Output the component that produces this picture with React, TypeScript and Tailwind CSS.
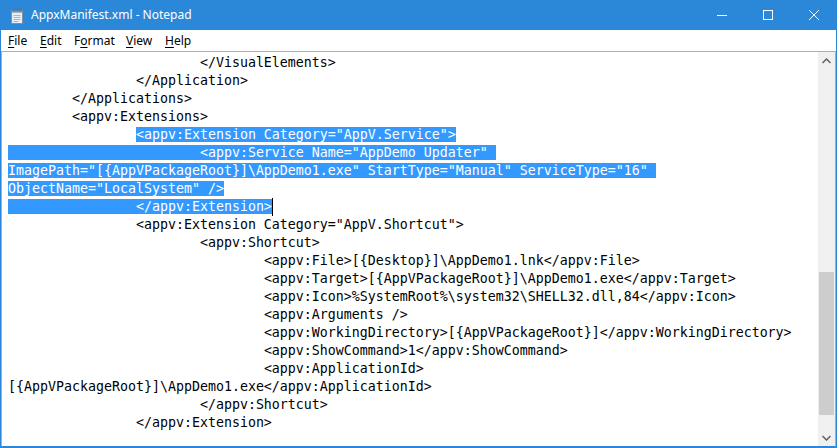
const lines: { pre?: string; sel?: string; post?: string; caret?: boolean }[] = [
  { pre: "\t\t\t</VisualElements>" },
  { pre: "\t\t</Application>" },
  { pre: "\t</Applications>" },
  { pre: "\t<appv:Extensions>" },
  { pre: "\t\t", sel: '<appv:Extension Category="AppV.Service">' },
  { sel: '\t\t\t<appv:Service Name="AppDemo Updater" ' },
  { sel: 'ImagePath="[{AppVPackageRoot}]\\AppDemo1.exe" StartType="Manual" ServiceType="16" ' },
  { sel: 'ObjectName="LocalSystem" />' },
  { sel: "\t\t</appv:Extension>", caret: true },
  { pre: '\t\t<appv:Extension Category="AppV.Shortcut">' },
  { pre: "\t\t\t<appv:Shortcut>" },
  { pre: "\t\t\t\t<appv:File>[{Desktop}]\\AppDemo1.lnk</appv:File>" },
  { pre: "\t\t\t\t<appv:Target>[{AppVPackageRoot}]\\AppDemo1.exe</appv:Target>" },
  { pre: "\t\t\t\t<appv:Icon>%SystemRoot%\\system32\\SHELL32.dll,84</appv:Icon>" },
  { pre: "\t\t\t\t<appv:Arguments />" },
  { pre: "\t\t\t\t<appv:WorkingDirectory>[{AppVPackageRoot}]</appv:WorkingDirectory>" },
  { pre: "\t\t\t\t<appv:ShowCommand>1</appv:ShowCommand>" },
  { pre: "\t\t\t\t<appv:ApplicationId>" },
  { pre: "[{AppVPackageRoot}]\\AppDemo1.exe</appv:ApplicationId>" },
  { pre: "\t\t\t</appv:Shortcut>" },
  { pre: "\t\t</appv:Extension>" },
];

const menu = [
  { key: "F", rest: "ile", w: "w-[32px]" },
  { key: "E", rest: "dit", w: "w-[34px]" },
  { key: "", lead: "F", keyMid: "o", rest: "rmat", w: "w-[52px]" },
  { key: "V", rest: "iew", w: "w-[39px]" },
  { key: "H", rest: "elp", w: "w-[40px]" },
];

function NotepadIcon() {
  return (
    <svg width="16" height="16" viewBox="0 0 16 16">
      <rect x="2.5" y="2.5" width="11" height="13" fill="#e8eef4" stroke="#7d8fa3" />
      <rect x="3" y="3" width="10" height="2" fill="#9fb4c9" />
      <path d="M4 1v3M6 1v3M8 1v3M10 1v3M12 1v3" stroke="#5b6b7c" strokeWidth="1" />
      <path d="M4.5 7.5h7M4.5 9.5h7M4.5 11.5h7M4.5 13.5h5" stroke="#a9b8c8" strokeWidth="1" />
    </svg>
  );
}

export default function App() {
  return (
    <div className="flex h-[448px] w-[837px] flex-col bg-[#2b88d8] font-['Noto_Sans',sans-serif]">
      {/* title bar */}
      <div className="flex h-[30px] shrink-0 items-center text-white">
        <div className="ml-[9px] mt-[1px] flex h-[16px] w-[16px]">
          <NotepadIcon />
        </div>
        <span className="ml-[6px] text-[12px] leading-none">AppxManifest.xml - Notepad</span>
        <div className="ml-auto flex h-full">
          <div className="flex h-full w-[46px] items-center justify-center">
            <svg width="10" height="10" viewBox="0 0 10 10">
              <path d="M0 5.5h10" stroke="white" strokeWidth="1" />
            </svg>
          </div>
          <div className="flex h-full w-[46px] items-center justify-center">
            <svg width="10" height="10" viewBox="0 0 10 10">
              <rect x="0.5" y="0.5" width="9" height="9" fill="none" stroke="white" strokeWidth="1" />
            </svg>
          </div>
          <div className="flex h-full w-[46px] items-center justify-center">
            <svg width="10" height="10" viewBox="0 0 10 10">
              <path d="M0 0L10 10M10 0L0 10" stroke="white" strokeWidth="1" />
            </svg>
          </div>
        </div>
      </div>

      <div className="mx-[1px] mb-[1px] flex min-h-0 flex-1 flex-col bg-white">
        {/* menu bar */}
        <div className="flex h-[21px] shrink-0 items-center pl-[7px] text-[12px] leading-none text-black">
          {menu.map((m, i) => (
            <div key={i} className={m.w}>
              {m.lead}
              {m.keyMid ? <span className="underline underline-offset-2">{m.keyMid}</span> : null}
              {m.key ? <span className="underline underline-offset-2">{m.key}</span> : null}
              {m.rest}
            </div>
          ))}
        </div>

        {/* edit area */}
        <div className="flex min-h-0 flex-1 border border-[#87b6e2] border-b-[#2b88d8]">
          <div className="min-w-0 flex-1 overflow-hidden pl-[6px] pt-[2px] font-['DejaVu_Sans_Mono',monospace] text-[13.29px] leading-[18px] text-black">
            {lines.map((l, i) => (
              <div key={i} className="h-[18px] whitespace-pre [tab-size:8]">
                {l.pre}
                {l.sel ? <span className="bg-[#3399ff] text-white">{l.sel}</span> : null}
                {l.caret ? <span className="inline-block h-[18px] w-[1px] bg-black align-top" /> : null}
              </div>
            ))}
          </div>

          {/* scrollbar */}
          <div className="flex w-[17px] shrink-0 flex-col bg-[#f0f0f0]">
            <div className="flex h-[17px] items-center justify-center">
              <svg width="9" height="6" viewBox="0 0 9 6">
                <path d="M0.5 5L4.5 1L8.5 5" fill="none" stroke="#606060" strokeWidth="1.5" />
              </svg>
            </div>
            <div className="flex flex-1 flex-col pt-[203px]">
              <div className="mx-[1px] h-[143px] bg-[#cdcdcd]" />
            </div>
            <div className="flex h-[17px] items-center justify-center">
              <svg width="9" height="6" viewBox="0 0 9 6">
                <path d="M0.5 1L4.5 5L8.5 1" fill="none" stroke="#606060" strokeWidth="1.5" />
              </svg>
            </div>
          </div>
        </div>
      </div>
    </div>
  );
}
